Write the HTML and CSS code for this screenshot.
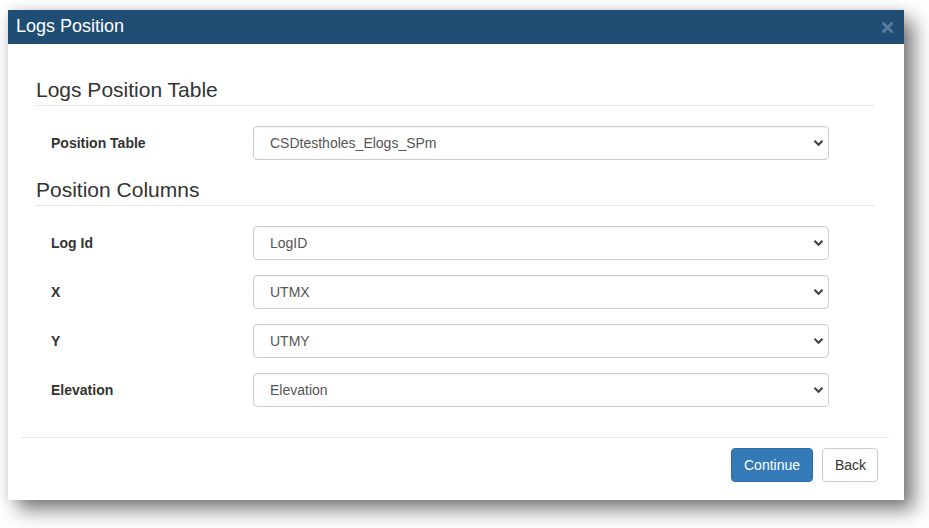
FILE: index.html
```html
<!DOCTYPE html>
<html>
<head>
<meta charset="utf-8">
<title>Logs Position</title>
<link rel="stylesheet" href="styles.css">
</head>
<body>
<div class="page">
  <div class="dialog">
    <div class="dialog-header">
      <span class="dialog-title">Logs Position</span>
      <svg class="close" width="11" height="11" viewBox="0 0 11 11"><path d="M1.5 1.5L9.5 9.5M9.5 1.5L1.5 9.5" stroke="#5a7c9b" stroke-width="3" stroke-linecap="square"/></svg>
    </div>
    <div class="dialog-body">
      <div class="legend">Logs Position Table</div>
      <div class="row">
        <div class="label">Position Table</div>
        <div class="select"><span>CSDtestholes_Elogs_SPm</span><svg width="11" height="8" viewBox="0 0 11 8"><path d="M1.5 1.8L5.5 5.8L9.5 1.8" fill="none" stroke="#444" stroke-width="2.2"/></svg></div>
      </div>
      <div class="legend legend-second">Position Columns</div>
      <div class="rows">
        <div class="row">
          <div class="label">Log Id</div>
          <div class="select"><span>LogID</span><svg width="11" height="8" viewBox="0 0 11 8"><path d="M1.5 1.8L5.5 5.8L9.5 1.8" fill="none" stroke="#444" stroke-width="2.2"/></svg></div>
        </div>
        <div class="row">
          <div class="label">X</div>
          <div class="select"><span>UTMX</span><svg width="11" height="8" viewBox="0 0 11 8"><path d="M1.5 1.8L5.5 5.8L9.5 1.8" fill="none" stroke="#444" stroke-width="2.2"/></svg></div>
        </div>
        <div class="row">
          <div class="label">Y</div>
          <div class="select"><span>UTMY</span><svg width="11" height="8" viewBox="0 0 11 8"><path d="M1.5 1.8L5.5 5.8L9.5 1.8" fill="none" stroke="#444" stroke-width="2.2"/></svg></div>
        </div>
        <div class="row">
          <div class="label">Elevation</div>
          <div class="select"><span>Elevation</span><svg width="11" height="8" viewBox="0 0 11 8"><path d="M1.5 1.8L5.5 5.8L9.5 1.8" fill="none" stroke="#444" stroke-width="2.2"/></svg></div>
        </div>
      </div>
    </div>
    <div class="dialog-footer">
      <button class="btn btn-primary">Continue</button>
      <button class="btn btn-default">Back</button>
    </div>
  </div>
</div>
</body>
</html>
```

FILE: styles.css
```css
* { box-sizing: border-box; }
html, body { margin: 0; padding: 0; background: #fff; }
body {
  font-family: "Liberation Sans", Arial, sans-serif;
  font-size: 14px;
  color: #333;
  width: 929px;
  height: 528px;
  overflow: hidden;
}
.page {
  padding: 10px 0 0 8px;
}
.dialog {
  width: 896px;
  height: 490px;
  background: #fff;
  box-shadow: 0 0 10px rgba(0,0,0,0.12), 10px 10px 18px rgba(0,0,0,0.5);
  display: flex;
  flex-direction: column;
}
.dialog-header {
  height: 34px;
  background: #204d74;
  display: flex;
  align-items: center;
  justify-content: space-between;
  padding: 0 11px 0 8px;
}
.dialog-title {
  color: #fff;
  font-size: 18px;
  line-height: 20px;
  margin-top: -2px;
}
.close { display: block; margin-top: 0; }
.dialog-body {
  padding: 31px 30px 0 28px;
}
.legend {
  font-size: 21px;
  line-height: 30px;
  color: #333;
  border-bottom: 1px solid #e5e5e5;
  margin-bottom: 20px;
}
.legend-second {
  margin-top: 15px;
}
.rows {
  display: flex;
  flex-direction: column;
  gap: 15px;
}
.row {
  display: flex;
  align-items: center;
}
.label {
  width: 217px;
  padding-left: 15px;
  font-weight: bold;
  font-size: 14px;
  color: #333;
}
.select {
  width: 576px;
  height: 34px;
  border: 1px solid #ccc;
  border-radius: 4px;
  display: flex;
  align-items: center;
  justify-content: space-between;
  padding: 0 4px 0 16px;
  color: #555;
  font-size: 14px;
  box-shadow: inset 0 1px 1px rgba(0,0,0,0.04);
}
.select svg { display: block; margin-right: 0; }
.dialog-footer {
  margin: 30px 15px 0 13px;
  border-top: 1px solid #e5e5e5;
  padding: 10px 11px 0 0;
  display: flex;
  justify-content: flex-end;
  gap: 9px;
}
.btn {
  font-family: "Liberation Sans", Arial, sans-serif;
  font-size: 14px;
  height: 34px;
  border-radius: 4px;
  border: 1px solid #ccc;
  padding: 0 12px;
  line-height: 20px;
}
.btn-primary {
  width: 82px;
  background: #337ab7;
  border-color: #2e6da4;
  color: #fff;
}
.btn-default {
  width: 56px;
  background: #fff;
  color: #333;
}
```
